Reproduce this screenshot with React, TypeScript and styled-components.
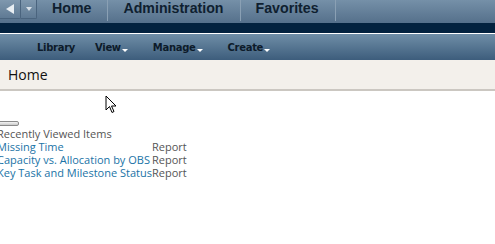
import React, { FC } from 'react';
import styled, { createGlobalStyle } from 'styled-components';

interface IRecent {
    title: string;
    type: string;
}

const GlobalStyle = createGlobalStyle`
    html, body {
        margin: 0;
        padding: 0;
        background: #ffffff;
        width: 495px;
        height: 244px;
        overflow: hidden;
    }
`;

const Page = styled.div`
    position: relative;
    width: 495px;
    height: 244px;
    font-family: 'Open Sans', 'DejaVu Sans', sans-serif;
`;

const TabBar = styled.div`
    height: 23px;
    display: flex;
    align-items: flex-start;
    background: linear-gradient(#7590a8, #55708b);
`;

const NavButton = styled.div<{ $width: number }>`
    width: ${(p) => p.$width}px;
    height: 19px;
    display: flex;
    align-items: center;
    justify-content: center;
    background: linear-gradient(#7f98ae, #5f7a94);
    border-right: 1px solid #4a647e;
    border-bottom: 1px solid #4a647e;
    border-bottom-right-radius: 2px;
    box-sizing: border-box;
`;

const Tabs = styled.div`
    display: flex;
`;

const Tab = styled.div`
    display: flex;
    align-items: center;
    height: 21px;
    padding: 0 16px 5px 15px;
    box-sizing: border-box;
    font-family: 'Liberation Sans', Arial, sans-serif;
    font-weight: bold;
    font-size: 14.2px;
    color: #0f1f30;
    border-right: 1px solid #8aa0b4;
`;

const DarkBand = styled.div`
    height: 10px;
    background: #03223f;
    border-bottom: 1px solid #ffffff;
`;

const MenuBar = styled.div`
    height: 26px;
    display: flex;
    align-items: center;
    padding-left: 37px;
    gap: 20px;
    background: linear-gradient(#6f8ea7, #3d5d7c);
`;

const MenuItem = styled.div`
    display: flex;
    align-items: center;
    font-family: 'DejaVu Sans', Verdana, sans-serif;
    font-weight: bold;
    font-size: 10px;
    color: #0d1b2a;
    letter-spacing: -0.3px;
`;

const Caret = styled.span`
    display: inline-block;
    width: 0;
    height: 0;
    margin: 6px 5px 0 1px;
    border-left: 3px solid transparent;
    border-right: 3px solid transparent;
    border-top: 3px solid #ffffff;
`;

const TitleBand = styled.div`
    height: 29px;
    display: flex;
    align-items: center;
    padding-left: 8px;
    background: #f3f0eb;
    border-bottom: 2px solid #cbc7c1;
    font-size: 14px;
    color: #101010;
`;

const Content = styled.div`
    padding-top: 30px;
    margin-left: -3px;
`;

const Pill = styled.div`
    width: 20px;
    height: 3px;
    border: 1px solid #8a8a8a;
    border-radius: 2px;
    background: linear-gradient(#f4f4f4, #c9c9c9);
`;

const Caption = styled.div`
    margin-top: 1px;
    font-size: 11px;
    line-height: 13px;
    color: #555;
`;

const Table = styled.table`
    border-collapse: collapse;
    font-size: 11px;
    line-height: 13px;
    td {
        padding: 0;
        white-space: nowrap;
    }
`;

const LinkCell = styled.td`
    color: #1a73a6;
`;

const TypeCell = styled.td`
    color: #555;
    text-align: right;
`;

const Cursor = styled.svg`
    position: absolute;
    left: 105px;
    top: 95px;
`;

const RECENT: IRecent[] = [
    { title: 'Missing Time', type: 'Report' },
    { title: 'Capacity vs. Allocation by OBS', type: 'Report' },
    { title: 'Key Task and Milestone Status', type: 'Report' },
];

const MENU = [
    { title: 'Library', caret: false },
    { title: 'View', caret: true },
    { title: 'Manage', caret: true },
    { title: 'Create', caret: true },
];

const TABS = ['Home', 'Administration', 'Favorites'];

const App: FC = () => {
    return (
        <Page>
            <GlobalStyle />
            <TabBar>
                <NavButton $width={21}>
                    <svg width="12" height="12" viewBox="0 0 12 12">
                        <path d="M10 1 L2 6 L10 11 Z" fill="#e8eef3" />
                    </svg>
                </NavButton>
                <NavButton $width={16}>
                    <svg width="8" height="6" viewBox="0 0 8 6">
                        <path d="M1 1 L7 1 L4 5 Z" fill="#d8e0e8" />
                    </svg>
                </NavButton>
                <Tabs>
                    {TABS.map((tab) => (
                        <Tab key={tab}>{tab}</Tab>
                    ))}
                </Tabs>
            </TabBar>
            <DarkBand />
            <MenuBar>
                {MENU.map((item) => (
                    <MenuItem key={item.title}>
                        {item.title}
                        {item.caret && <Caret />}
                    </MenuItem>
                ))}
            </MenuBar>
            <TitleBand>Home</TitleBand>
            <Content>
                <Pill />
                <Caption>Recently Viewed Items</Caption>
                <Table>
                    <tbody>
                        {RECENT.map((row) => (
                            <tr key={row.title}>
                                <LinkCell>{row.title}</LinkCell>
                                <TypeCell>{row.type}</TypeCell>
                            </tr>
                        ))}
                    </tbody>
                </Table>
            </Content>
            <Cursor width="14" height="20" viewBox="0 0 14 20">
                <path d="M1 1 L1 15 L4.5 11.5 L7 17.5 L9 16.5 L6.5 11 L11 11 Z" fill="#fff" stroke="#000" strokeWidth="1" />
            </Cursor>
        </Page>
    );
};

export default App;
